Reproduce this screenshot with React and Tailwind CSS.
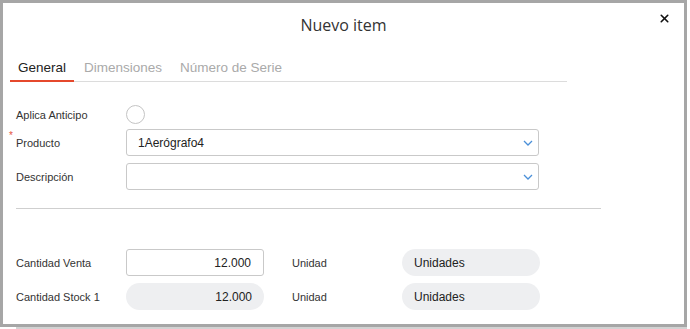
import { X } from "lucide-react";

const Chevron = () => (
  <svg width="10" height="6" viewBox="0 0 10 6" className="shrink-0">
    <path d="M1 1l4 4 4-4" fill="none" stroke="#4a8fd8" strokeWidth="1.3" />
  </svg>
);

const Field = ({ label, required, children }) => (
  <div className="flex items-center">
    <div className="relative w-[110px] text-[11px] text-[#333]">
      {required && (
        <span className="absolute -left-[7px] -top-[7px] text-[10px] text-[#e5533d]">*</span>
      )}
      {label}
    </div>
    {children}
  </div>
);

const Select = ({ value }) => (
  <div className="flex h-[27px] w-[413px] items-center justify-between rounded-[3px] border border-[#c9c9c9] pl-[11px] pr-[5px] text-[12px] text-[#222]">
    <span>{value}</span>
    <Chevron />
  </div>
);

const App = () => {
  const tabs = ["General", "Dimensiones", "Número de Serie"];

  return (
    <div className="h-[329px] w-[690px] bg-white font-['Liberation_Sans',Arial,sans-serif]">
      <div className="h-[327px] w-[687px] border-[3px] border-[#a6a6a6] bg-white">
        <div className="relative flex h-[41px] items-center justify-center">
          <h2 className="pt-[2px] font-['Open_Sans',sans-serif] text-[16px] text-[#333]">Nuevo item</h2>
          <button className="absolute right-[13px] top-[9px] text-[#111]">
            <X size={13} strokeWidth={3} />
          </button>
        </div>

        <div className="ml-[7px] mt-[14px] flex w-[557px] gap-[2px] border-b border-[#dcdcdc]">
          {tabs.map((t, i) => (
            <div
              key={t}
              className={
                i === 0
                  ? "-mb-px border-b-2 border-[#e5482c] px-2 pb-[2px] text-[13.5px] text-[#222]"
                  : "px-2 pb-[2px] text-[13.5px] text-[#aaa]"
              }
            >
              {t}
            </div>
          ))}
        </div>

        <div className="pl-[13px] pt-[23px]">
          <div className="flex flex-col gap-[7px]">
            <Field label="Aplica Anticipo">
              <div className="h-[19px] w-[19px] rounded-full border border-[#c4c4c4]" />
            </Field>
            <div className="mt-[-2px] flex flex-col gap-[7px]">
              <Field label="Producto" required>
                <Select value="1Aerógrafo4" />
              </Field>
              <Field label="Descripción">
                <Select value="" />
              </Field>
            </div>
          </div>

          <div className="mt-[18px] h-px w-[585px] bg-[#cfcfcf]" />

          <div className="mt-[40px] flex flex-col gap-[7px]">
            <Field label="Cantidad Venta">
              <div className="flex h-[27px] w-[138px] items-center justify-end rounded-[3px] border border-[#c9c9c9] pr-[12px] text-[12px] text-[#222]">
                12.000
              </div>
              <div className="w-[138px] pl-[28px] text-[11px] text-[#333]">Unidad</div>
              <div className="flex h-[27px] w-[138px] items-center rounded-full bg-[#eeeff1] pl-[12px] text-[12px] text-[#222]">
                Unidades
              </div>
            </Field>
            <Field label="Cantidad Stock 1">
              <div className="flex h-[27px] w-[138px] items-center justify-end rounded-full bg-[#eeeff1] pr-[12px] text-[12px] text-[#222]">
                12.000
              </div>
              <div className="w-[138px] pl-[28px] text-[11px] text-[#333]">Unidad</div>
              <div className="flex h-[27px] w-[138px] items-center rounded-full bg-[#eeeff1] pl-[12px] text-[12px] text-[#222]">
                Unidades
              </div>
            </Field>
          </div>
        </div>
      </div>
      <div className="ml-[16px] h-[2px] w-[671px] bg-[#d2d2d2]" />
    </div>
  );
};

export default App;
